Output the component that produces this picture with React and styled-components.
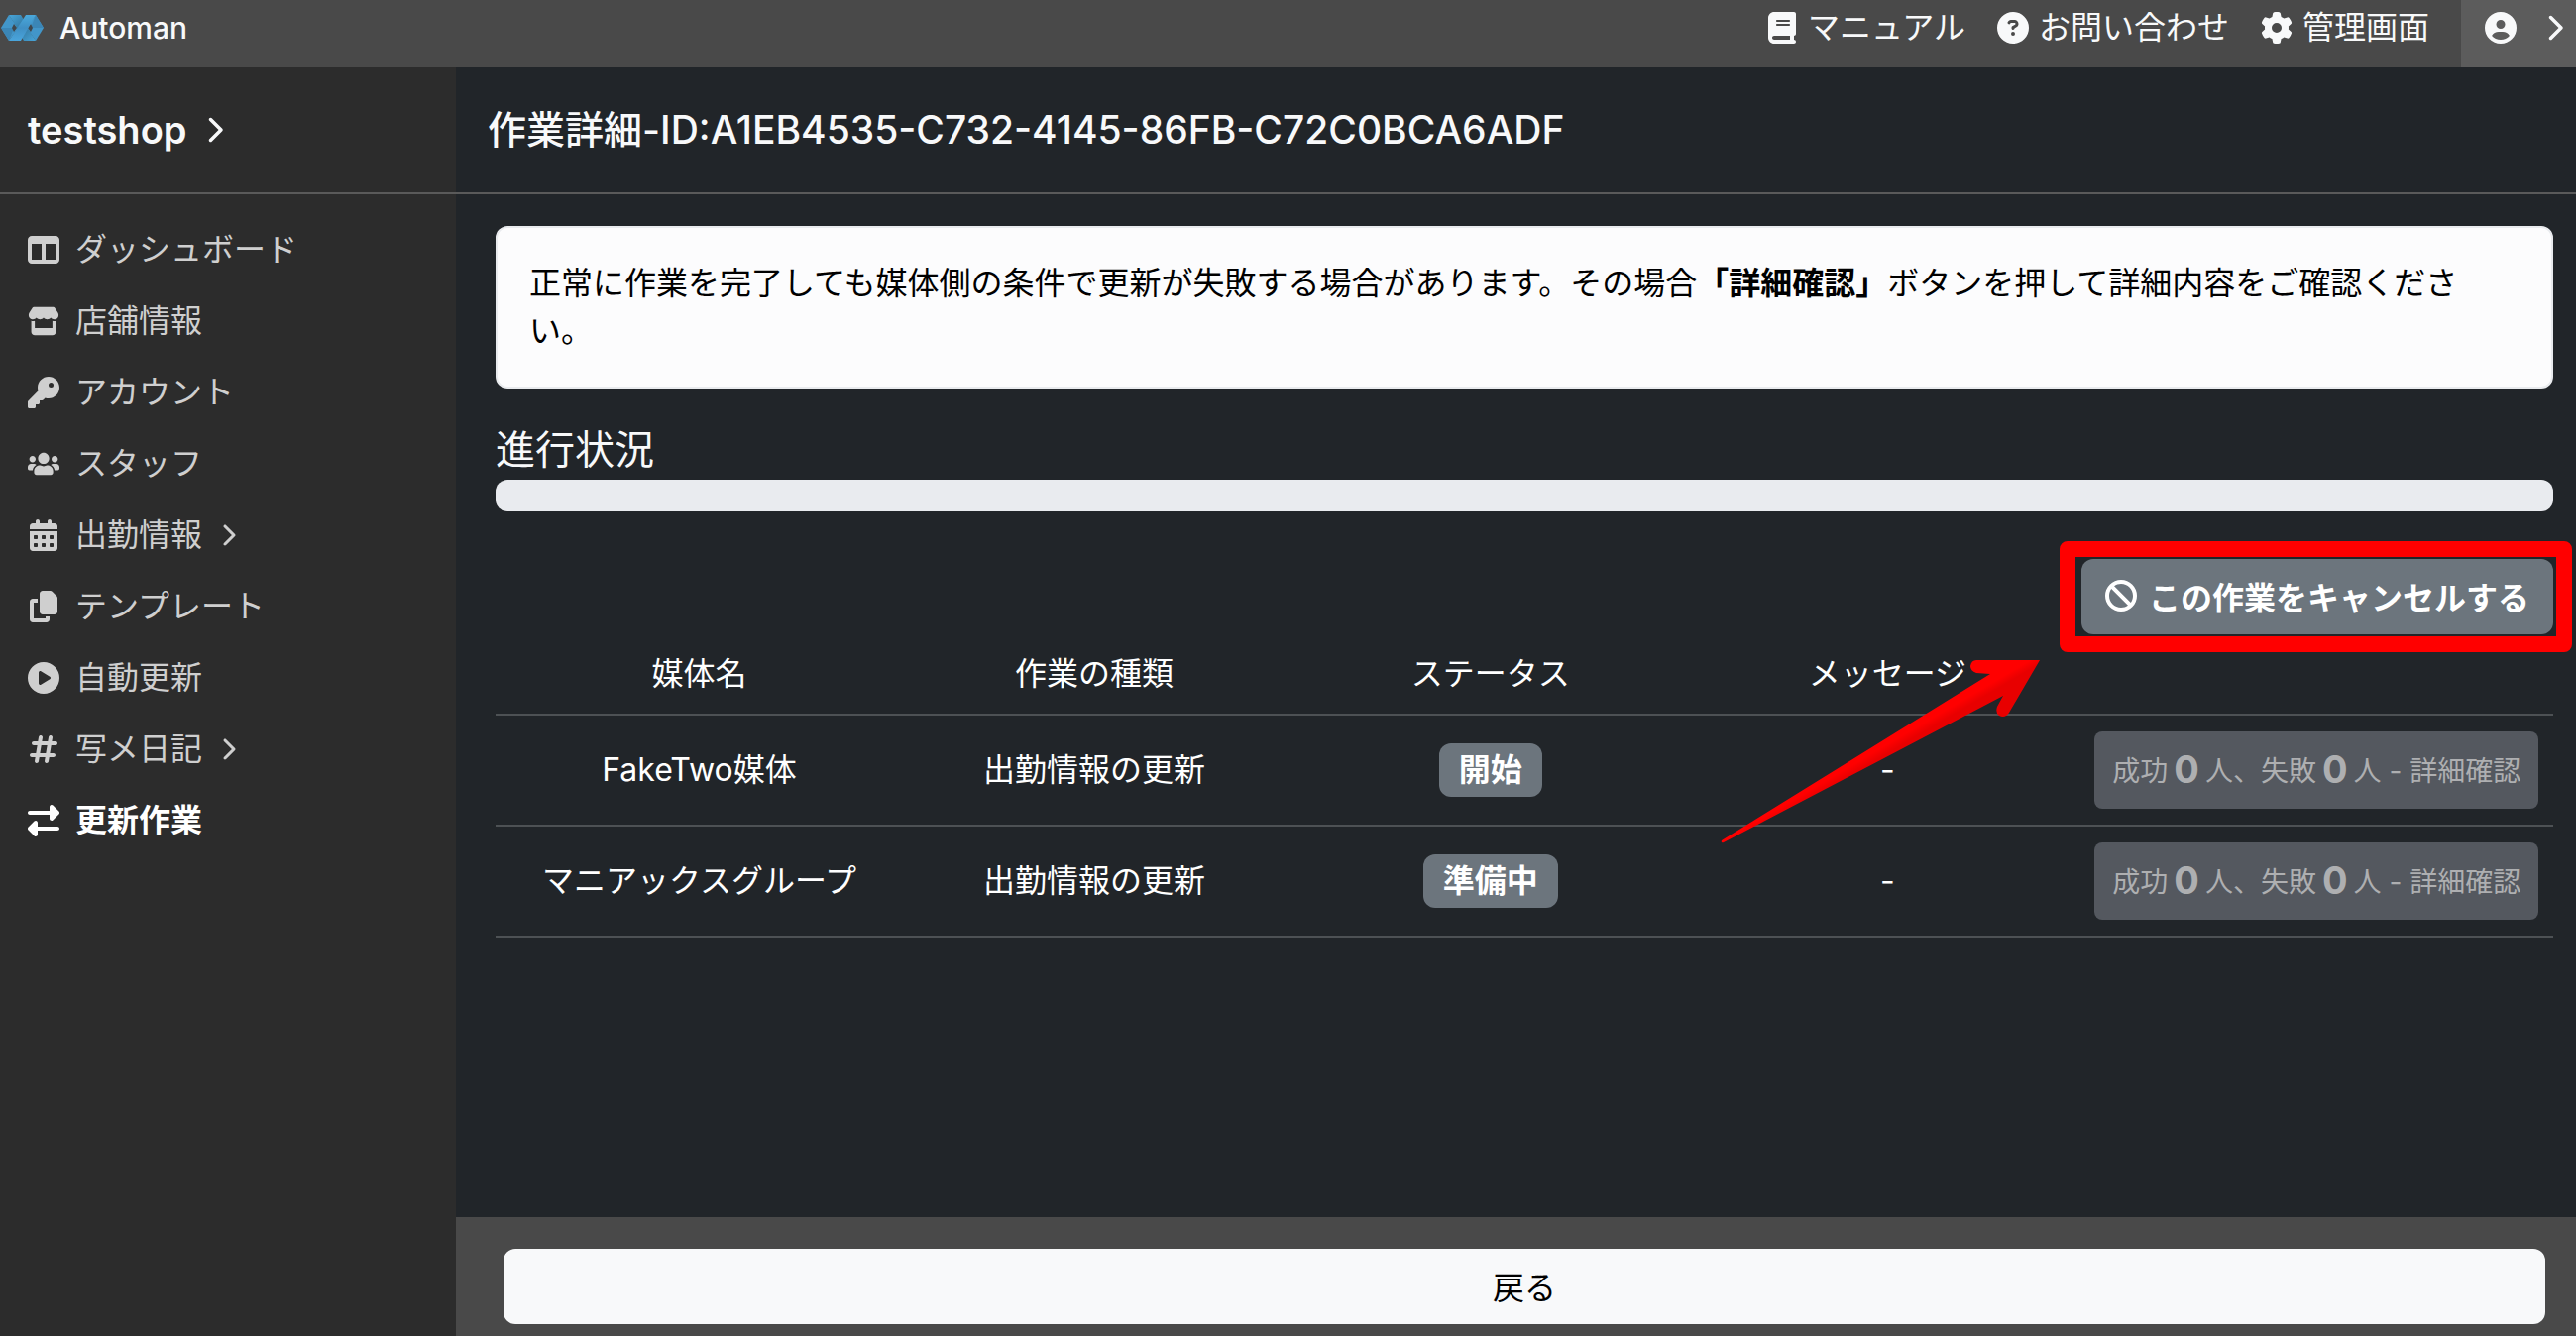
import React from 'react';
import styled, { createGlobalStyle } from 'styled-components';
import {
    FaBan,
    FaBook,
    FaCalendarDays,
    FaChevronRight,
    FaCircleQuestion,
    FaCircleUser,
    FaCirclePlay,
    FaCopy,
    FaGear,
    FaHashtag,
    FaKey,
    FaRightLeft,
    FaStore,
    FaTableColumns,
} from 'react-icons/fa6';
import { FaUsers } from 'react-icons/fa';

const GlobalStyle = createGlobalStyle`
    * {
        box-sizing: border-box;
    }

    body {
        margin: 0;
        background-color: #212529;
        color: #f8f9fa;
        font-family: Inter, "Noto Sans CJK JP", sans-serif;
        font-size: 32px;
        line-height: 48px;
    }

    button {
        font-family: inherit;
    }
`;

const Page = styled.div`
    display: flex;
    flex-direction: column;
    min-height: 100vh;
`;

const TopBar = styled.header`
    display: flex;
    justify-content: space-between;
    height: 68px;
    background-color: #494949;
`;

const Brand = styled.a`
    display: flex;
    align-items: center;
    gap: 12px;
    padding-bottom: 12px;
    color: #f8f9fa;
    font-size: 30px;
    font-weight: 500;
    text-decoration: none;
`;

const TopMenu = styled.nav`
    display: flex;
`;

const TopLink = styled.a`
    display: flex;
    align-items: center;
    gap: 10px;
    padding: 0 16px 12px;
    color: #f8f9fa;
    text-decoration: none;
`;

const UserButton = styled.button`
    display: flex;
    align-items: center;
    gap: 24px;
    padding: 0 8px 12px 24px;
    border: none;
    margin-left: 16px;
    background-color: #5c5c5c;
    color: #f8f9fa;
    font-size: 32px;
`;

const Body = styled.div`
    display: flex;
    flex: 1;
`;

const Sidebar = styled.aside`
    width: 460px;
    flex-shrink: 0;
    background-color: #2c2c2c;
`;

const Heading = styled.div`
    display: flex;
    align-items: center;
    gap: 14px;
    height: 128px;
    padding: 0 ${(props) => (props.$wide ? '32px' : '28px')};
    border-bottom: 2px solid #5a5a5a;
`;

const Title = styled.h1`
    margin: 0;
    font-size: 39px;
    font-weight: 500;
    line-height: 48px;
`;

const ShopName = styled.h2`
    margin: 0;
    font-size: 38px;
    font-weight: 600;
    line-height: 48px;
`;

const Menu = styled.ul`
    list-style: none;
    margin: 0;
    padding: 20px 28px;
`;

const MenuLink = styled.a`
    display: flex;
    align-items: center;
    height: 72px;
    color: ${(props) => (props.$active ? '#ffffff' : '#cfcfcf')};
    font-weight: ${(props) => (props.$active ? 700 : 400)};
    text-decoration: none;
`;

const MenuIcon = styled.span`
    display: flex;
    justify-content: center;
    width: 32px;
    margin-right: 16px;
`;

const MenuArrow = styled(FaChevronRight)`
    margin-left: 14px;
`;

const Main = styled.main`
    display: flex;
    flex: 1;
    flex-direction: column;
    min-width: 0;
`;

const Content = styled.div`
    flex: 1;
    padding: 32px 23px 32px 40px;
`;

const Notice = styled.p`
    margin: 0;
    padding: 32px;
    border: 2px solid #e9ebee;
    border-radius: 12px;
    background-color: #fcfcfd;
    color: #000000;
`;

const SectionTitle = styled.h2`
    margin: 38px 0 6px;
    font-size: 40px;
    font-weight: 400;
    line-height: 48px;
`;

const ProgressTrack = styled.div`
    height: 32px;
    border-radius: 12px;
    background-color: #e9ebef;
`;

const Actions = styled.div`
    display: flex;
    justify-content: flex-end;
    margin-top: 48px;
`;

/* red marker frame round the cancel button */
const Marked = styled.div`
    position: relative;

    &::after {
        content: "";
        position: absolute;
        inset: -18px -19px -18px -22px;
        border: 16px solid #ff0000;
        border-radius: 8px;
        pointer-events: none;
    }
`;

const Arrow = styled.svg`
    position: absolute;
    top: 100px;
    right: calc(100% + 40px);
    pointer-events: none;
`;

const CancelButton = styled.button`
    display: flex;
    align-items: center;
    gap: 12px;
    height: 76px;
    padding: 0 24px 2px;
    border: none;
    border-radius: 12px;
    background-color: #6c757d;
    color: #ffffff;
    font-size: 32px;
    font-weight: 700;
`;

const Table = styled.table`
    width: 100%;
    border-collapse: separate;
    border-spacing: 0;
    table-layout: fixed;
    color: #ffffff;
    text-align: center;
`;

const Column = styled.col`
    width: ${(props) => props.$width};
`;

const Cell = styled.td`
    padding: 16px 12px;
    border-bottom: 2px solid #4d5154;
    font-weight: 400;
`;

const Badge = styled.span`
    display: inline-block;
    padding: 11px 20px;
    border-radius: 12px;
    background-color: #6c757d;
    font-weight: 700;
    line-height: 32px;
    vertical-align: middle;
`;

const DetailButton = styled.button`
    display: inline-flex;
    align-items: center;
    justify-content: center;
    gap: 6px;
    height: 78px;
    padding: 0 18px 2px;
    border: none;
    border-radius: 8px;
    background-color: #54585f;
    color: #aeafb1;
    font-size: 28px;
    white-space: nowrap;
    vertical-align: middle;
`;

const Count = styled.strong`
    font-size: 38px;
    font-weight: 700;
`;

const Footer = styled.footer`
    padding: 32px 31px 12px 48px;
    background-color: #494949;
`;

const BackButton = styled.button`
    width: 100%;
    height: 76px;
    padding: 0 24px 2px;
    border: none;
    border-radius: 12px;
    background-color: #f8f9fa;
    color: #000000;
    font-size: 32px;
`;

const Logo = () => (
    <svg width="48" height="28" viewBox="0 0 48 28" aria-hidden="true">
        <defs>
            <linearGradient id="band" x1="0" y1="0" x2="0" y2="1">
                <stop offset="0" stopColor="#4aa9dc" />
                <stop offset="0.5" stopColor="#3f8fc4" />
                <stop offset="1" stopColor="#4aa5dc" />
            </linearGradient>
            <linearGradient id="fold" x1="0" y1="0" x2="1" y2="1">
                <stop offset="0" stopColor="#48a6da" />
                <stop offset="1" stopColor="#2f7199" />
            </linearGradient>
            <linearGradient id="foldBack" x1="1" y1="1" x2="0" y2="0">
                <stop offset="0" stopColor="#48a6da" />
                <stop offset="1" stopColor="#2f7199" />
            </linearGradient>
        </defs>
        {/* left wing */}
        <path d="M9 1 L1 14 L9 27 L18 14 Z" fill="#4296c9" />
        <path d="M1 14 H14 L9 27 Z" fill="#3b86b6" />
        <path d="M9 1 H21 L24 6 L18 15 Z" fill="url(#fold)" />
        <path d="M14 10 L17 14 L14 18 L12 14 Z" fill="#40474c" />
        {/* right wing */}
        <path d="M36 1 L44 14 L36 27 L27 14 Z" fill="#4296c9" />
        <path d="M44 14 H31 L36 1 Z" fill="#3b86b6" />
        <path d="M36 27 H24 L21 22 L27 13 Z" fill="url(#foldBack)" />
        <path d="M31 10 L33 14 L31 18 L28 14 Z" fill="#40474c" />
        <path d="M26 1 H36 L21 27 H9 Z" fill="url(#band)" />
    </svg>
);

const topLinks = [
    { label: 'マニュアル', icon: FaBook },
    { label: 'お問い合わせ', icon: FaCircleQuestion },
    { label: '管理画面', icon: FaGear },
];

const menuItems = [
    { label: 'ダッシュボード', icon: FaTableColumns },
    { label: '店舗情報', icon: FaStore },
    { label: 'アカウント', icon: FaKey },
    { label: 'スタッフ', icon: FaUsers },
    { label: '出勤情報', icon: FaCalendarDays, nested: true },
    { label: 'テンプレート', icon: FaCopy },
    { label: '自動更新', icon: FaCirclePlay },
    { label: '写メ日記', icon: FaHashtag, nested: true },
    { label: '更新作業', icon: FaRightLeft, active: true },
];

const columns = [
    { label: '媒体名', width: '19.8%' },
    { label: '作業の種類', width: '18.6%' },
    { label: 'ステータス', width: '19.9%' },
    { label: 'メッセージ', width: '18.7%' },
    { label: '', width: '23%' },
];

const jobs = [
    { media: 'FakeTwo媒体', type: '出勤情報の更新', status: '開始', message: '-', success: 0, failure: 0 },
    { media: 'マニアックスグループ', type: '出勤情報の更新', status: '準備中', message: '-', success: 0, failure: 0 },
];

const App = () => {
    return (
        <Page>
            <GlobalStyle />
            <TopBar>
                <Brand href="#">
                    <Logo />
                    Automan
                </Brand>
                <TopMenu>
                    {topLinks.map(({ label, icon: Icon }) => (
                        <TopLink href="#" key={label}>
                            <Icon />
                            {label}
                        </TopLink>
                    ))}
                    <UserButton aria-label="ユーザーメニュー">
                        <FaCircleUser />
                        <FaChevronRight size={28} />
                    </UserButton>
                </TopMenu>
            </TopBar>
            <Body>
                <Sidebar>
                    <Heading>
                        <ShopName>testshop</ShopName>
                        <FaChevronRight size={28} />
                    </Heading>
                    <Menu>
                        {menuItems.map(({ label, icon: Icon, nested, active }) => (
                            <li key={label}>
                                <MenuLink href="#" $active={active}>
                                    <MenuIcon>
                                        <Icon />
                                    </MenuIcon>
                                    {label}
                                    {nested && <MenuArrow size={24} />}
                                </MenuLink>
                            </li>
                        ))}
                    </Menu>
                </Sidebar>
                <Main>
                    <Heading $wide>
                        <Title>作業詳細-ID:A1EB4535-C732-4145-86FB-C72C0BCA6ADF</Title>
                    </Heading>
                    <Content>
                        <Notice>
                            正常に作業を完了しても媒体側の条件で更新が失敗する場合があります。その場合<strong>「詳細確認」</strong>ボタンを押して詳細内容をご確認ください。
                        </Notice>
                        <SectionTitle>進行状況</SectionTitle>
                        <ProgressTrack role="progressbar" aria-label="進行状況" aria-valuenow={0} />
                        <Actions>
                            <Marked>
                                <CancelButton>
                                    <FaBan />
                                    この作業をキャンセルする
                                </CancelButton>
                                <Arrow width="325" height="190" viewBox="0 0 325 190" aria-hidden="true">
                                    <defs>
                                        <linearGradient id="shade" gradientUnits="userSpaceOnUse" x1="150" y1="80" x2="170" y2="114">
                                            <stop offset="0.4" stopColor="#ff0000" />
                                            <stop offset="0.6" stopColor="#e80000" />
                                        </linearGradient>
                                    </defs>
                                    <path
                                        d="M259 2 H323 L292 55 Q288 61 282 58 Q278 55 280 49 L286 38 L4 186 Q1 187 2 184 L273 16 L259 15 Q253 13 253 8 Q254 2 259 2 Z"
                                        fill="url(#shade)"
                                    />
                                </Arrow>
                            </Marked>
                        </Actions>
                        <Table>
                            <colgroup>
                                {columns.map(({ label, width }) => (
                                    <Column key={label} $width={width} />
                                ))}
                            </colgroup>
                            <thead>
                                <tr>
                                    {columns.map(({ label }) => (
                                        <Cell as="th" key={label}>{label}</Cell>
                                    ))}
                                </tr>
                            </thead>
                            <tbody>
                                {jobs.map((job) => (
                                    <tr key={job.media}>
                                        <Cell>{job.media}</Cell>
                                        <Cell>{job.type}</Cell>
                                        <Cell><Badge>{job.status}</Badge></Cell>
                                        <Cell>{job.message}</Cell>
                                        <Cell>
                                            <DetailButton disabled>
                                                成功 <Count>{job.success}</Count> 人、失敗 <Count>{job.failure}</Count> 人 - 詳細確認
                                            </DetailButton>
                                        </Cell>
                                    </tr>
                                ))}
                            </tbody>
                        </Table>
                    </Content>
                    <Footer>
                        <BackButton>戻る</BackButton>
                    </Footer>
                </Main>
            </Body>
        </Page>
    );
};

export default App;
